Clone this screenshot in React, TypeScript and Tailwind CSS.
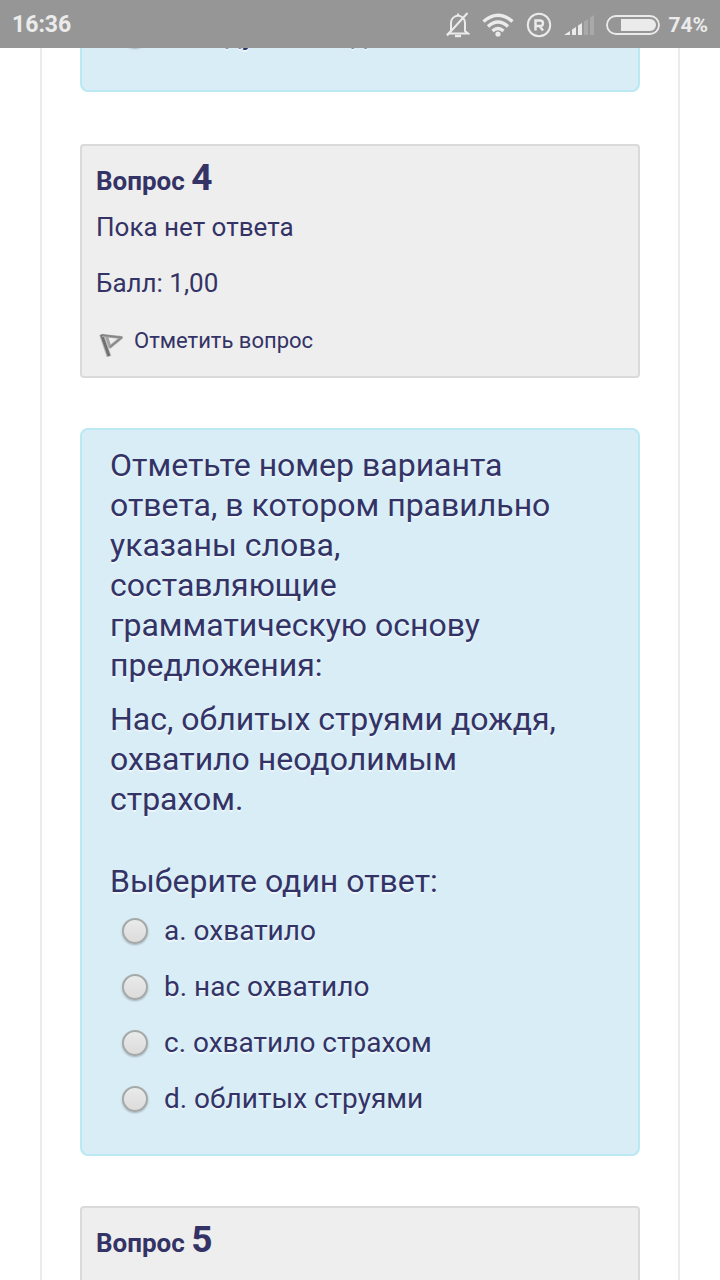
import { useState } from 'react';

type Option = { id: string; text: string };

const options: Option[] = [
  { id: 'a', text: 'a. охватило' },
  { id: 'b', text: 'b. нас охватило' },
  { id: 'c', text: 'c. охватило страхом' },
  { id: 'd', text: 'd. облитых струями' },
];

export default function App() {
  const [answers, setAnswers] = useState<Record<string, string>>({});
  const pick = (name: string, id: string) => setAnswers({ ...answers, [name]: id });

  return (
    <div className="flex h-screen flex-col overflow-hidden bg-white font-[Roboto,sans-serif] text-[#333366]">
      <StatusBar />
      <main className="mx-10 flex-1 overflow-hidden border-x-2 border-[#ebebeb] px-[38px]">
        <div className="-mt-[58px] pb-0.5">
          <QuestionBody>
            <AnswerOption
              name="q3"
              option={{ id: 'd', text: 'd. ведут восход' }}
              checked={answers.q3 === 'd'}
              onPick={pick}
            />
          </QuestionBody>
        </div>

        <QuestionInfo number={4}>
          <div className="mt-[7px] text-[26px] leading-8">Пока нет ответа</div>
          <div className="mt-6 text-[26px] leading-8">Балл: 1,00</div>
          <a href="#flag" className="mt-[26px] flex items-center gap-2 text-[22px] leading-8">
            <FlagIcon />
            Отметить вопрос
          </a>
        </QuestionInfo>

        <QuestionBody>
          <p className="text-[32px] leading-10">
            Отметьте номер варианта ответа, в котором правильно указаны слова,
            составляющие грамматическую основу предложения:
          </p>
          <p className="mt-[14px] text-[32px] leading-10">
            Нас, облитых струями дождя, охватило неодолимым страхом.
          </p>
          <fieldset className="mt-[42px]">
            <legend className="text-[32px] leading-10">Выберите один ответ:</legend>
            <div className="mt-0.5">
              {options.map((o) => (
                <AnswerOption key={o.id} name="q4" option={o} checked={answers.q4 === o.id} onPick={pick} />
              ))}
            </div>
          </fieldset>
        </QuestionBody>

        <QuestionInfo number={5} />
      </main>
    </div>
  );
}

function QuestionInfo({ number, children }: { number: number; children?: React.ReactNode }) {
  return (
    <section className="my-[50px] rounded border-2 border-[#dadada] bg-[#eeeeee] px-[14px] pt-[9px] pb-[19px]">
      <h3 className="text-[26px] leading-[46px] font-bold">
        Вопрос <span className="text-[37px]">{number}</span>
      </h3>
      {children}
    </section>
  );
}

function QuestionBody({ children }: { children: React.ReactNode }) {
  return (
    <section className="rounded-lg border-2 border-[#bce8f1] bg-[#d9edf7] pt-[15px] pr-[68px] pb-[27px] pl-7 text-shadow-[0_2px_0_rgba(255,255,255,0.5)]">
      {children}
    </section>
  );
}

function AnswerOption({ name, option, checked, onPick }: {
  name: string;
  option: Option;
  checked: boolean;
  onPick: (name: string, id: string) => void;
}) {
  return (
    <label className="flex h-14 items-center gap-4 pl-3 text-[28px] leading-10">
      <input
        type="radio"
        name={name}
        checked={checked}
        onChange={() => onPick(name, option.id)}
        className="size-[26px] shrink-0 appearance-none rounded-full border-2 border-[#a4a8a8] bg-linear-to-b from-[#eaeaea] to-[#dcdcdc] shadow-[0_1px_2px_rgba(0,0,0,0.25)] checked:bg-[#777777]"
      />
      {option.text}
    </label>
  );
}

function FlagIcon() {
  return (
    <svg width="30" height="32" viewBox="0 0 30 32" fill="none" className="shrink-0">
      <path d="M5.5 9.5 L13 31.5" stroke="#b8b8b8" strokeWidth="4.8" />
      <path d="M5.5 9.5 L13 31" stroke="#707070" strokeWidth="2.8" />
      <path d="M6 10.5 L25.5 12.5 L14 22 L10.5 11.5" stroke="#a6a6a6" strokeWidth="3" strokeLinejoin="round" />
      <path d="M6 10 L25.5 12.5 L14 22" stroke="#858585" strokeWidth="1.3" strokeLinejoin="round" />
    </svg>
  );
}

function StatusBar() {
  return (
    <header className="relative z-10 flex h-12 shrink-0 items-center justify-between bg-[#969696] px-3 pt-0.5 text-[#ebebeb]">
      <time className="text-[23px] leading-8 font-bold">16:36</time>
      <div className="flex items-center">
        <svg width="24" height="28" viewBox="0 0 24 28" fill="none" stroke="currentColor" strokeWidth="2">
          <path d="M5 20 V12 C5 8 8 5 12 4.5 C16 5 19 8 19 12 V20 L22 22.5 H2.5 L5 20" />
          <path d="M12 4.5 V2.5 M1 24.5 L21.5 2" />
          <path d="M9 25 H15" strokeWidth="2.4" />
        </svg>
        <svg width="32" height="24" viewBox="0 0 32 24" fill="none" stroke="currentColor" strokeWidth="3.4" className="ml-3">
          <path d="M1.5 8.5 Q16 -4 30.5 8.5" />
          <path d="M6 13.5 Q16 4.5 26 13.5" />
          <path d="M10.5 18 Q16 13 21.5 18" />
          <circle cx="16" cy="21" r="2.6" fill="currentColor" stroke="none" />
        </svg>
        <svg width="26" height="26" viewBox="0 0 26 26" fill="none" stroke="currentColor" className="ml-3">
          <circle cx="13" cy="13" r="11.2" strokeWidth="2" />
          <path d="M9.5 18.5 V8.5 H14 Q17 8.5 17 11.2 T14 14 H9.5 M13.5 14 L17 18.5" strokeWidth="2.4" />
        </svg>
        <svg width="30" height="22" viewBox="0 0 30 22" fill="currentColor" className="ml-3">
          <path d="M0 21 L6 17 V21 Z M8 15.5 L12 13 V21 H8 Z M14 11.5 L18 9 V21 H14 Z" />
          <path d="M20 7.5 L24 5 V21 H20 Z M26 3.5 L30 1 V21 H26 Z" opacity="0.22" />
        </svg>
        <svg width="54" height="20" viewBox="0 0 54 20" className="ml-3">
          <rect x="1" y="1" width="52" height="18" rx="9" fill="none" stroke="currentColor" strokeWidth="1.8" />
          <path d="M15 4 H44 A6 6 0 0 1 44 16 H15 Z" fill="currentColor" />
        </svg>
        <span className="ml-2 text-[21px] leading-8 font-bold">74%</span>
      </div>
    </header>
  );
}
